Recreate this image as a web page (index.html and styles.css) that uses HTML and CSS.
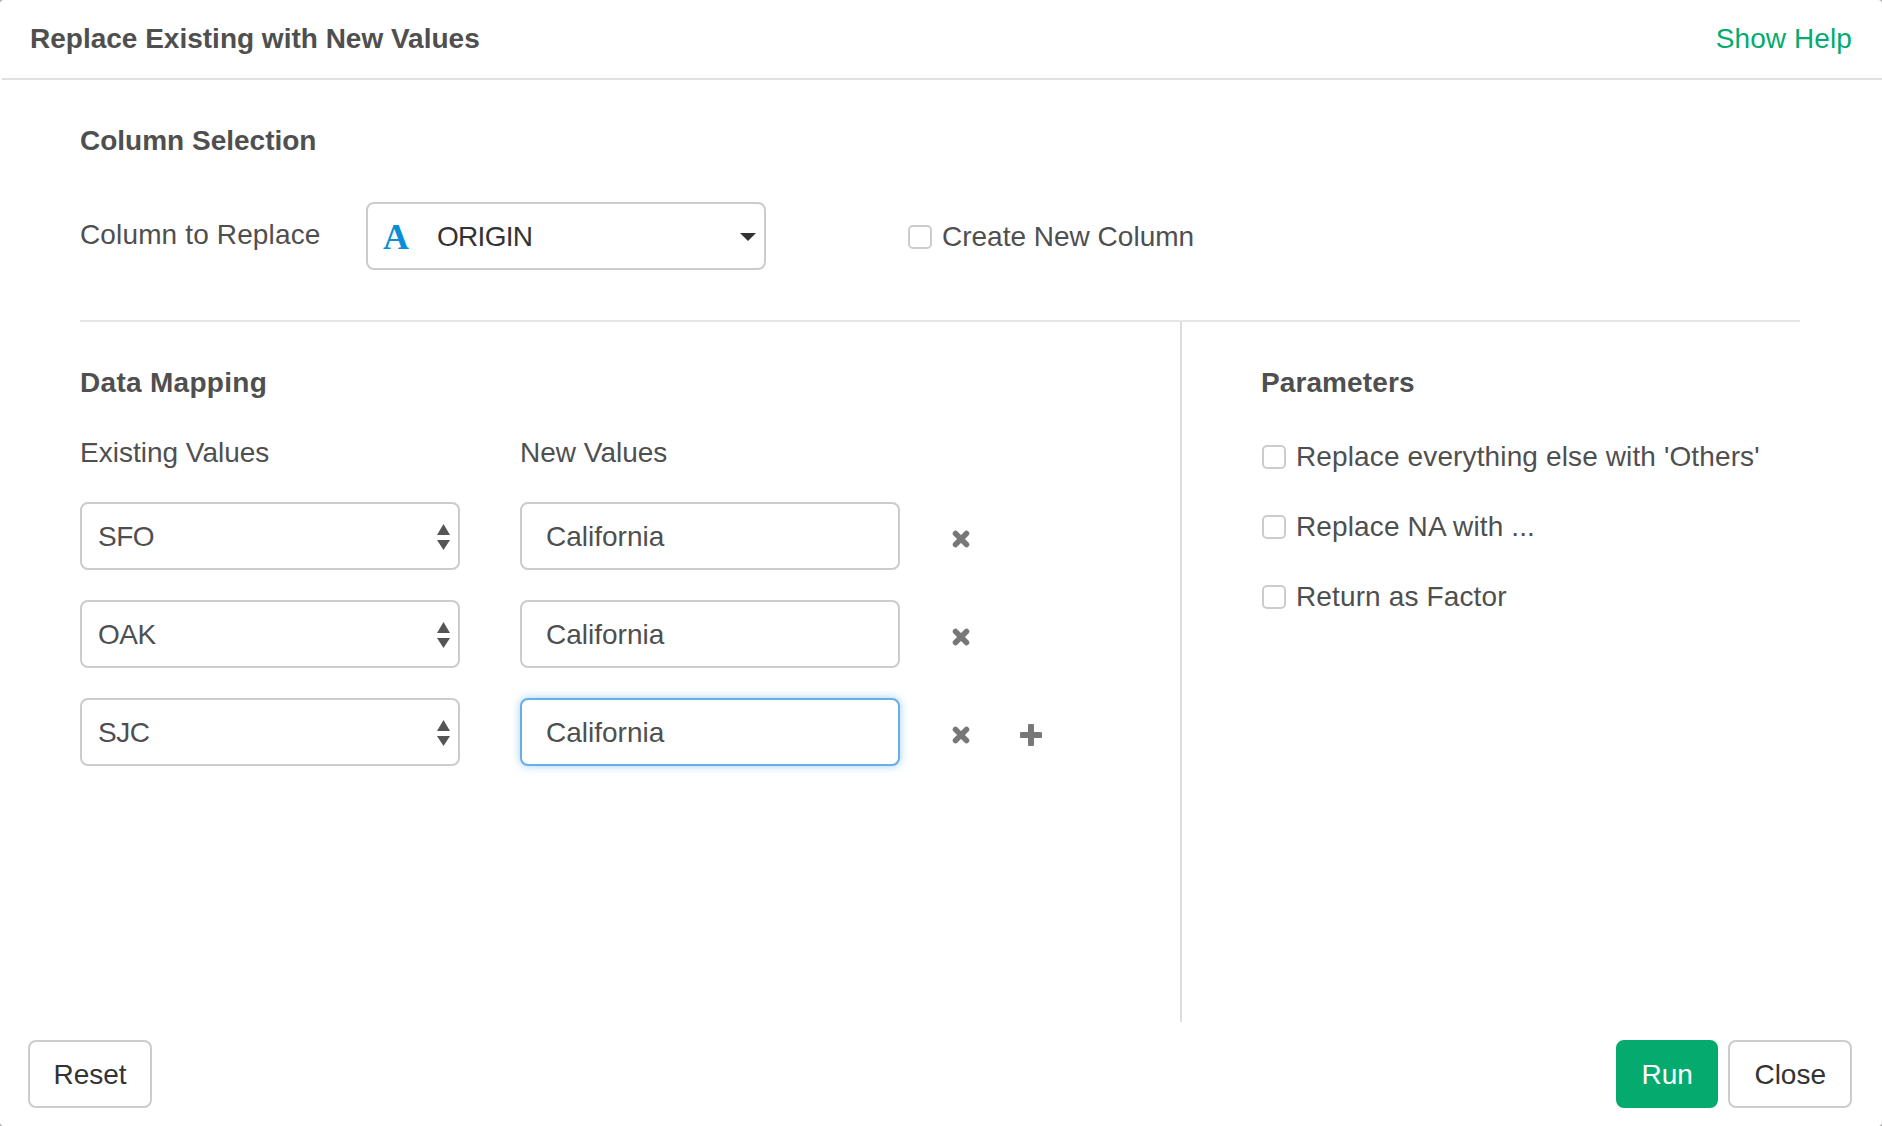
FILE: index.html
```html
<!DOCTYPE html>
<html lang="en">
<head>
    <meta charset="UTF-8">
    <title>Replace Existing with New Values</title>
    <link rel="stylesheet" href="styles.css">
</head>
<body>
    <div class="modal">
        <header class="modal-header">
            <h1 class="modal-title">Replace Existing with New Values</h1>
            <a class="help-link" href="#">Show Help</a>
        </header>

        <main class="modal-body">
            <section class="column-section">
                <h2 class="section-title">Column Selection</h2>
                <div class="column-row">
                    <label class="column-label">Column to Replace</label>
                    <div class="column-select">
                        <span class="type-icon">A</span>
                        <span class="column-name">ORIGIN</span>
                        <svg class="caret" width="16" height="8" viewBox="0 0 16 8"><path d="M0 0h16L8 8z"/></svg>
                    </div>
                    <label class="check-row create-column"><input type="checkbox" class="check">Create New Column</label>
                </div>
            </section>

            <div class="split">
                <section class="mapping">
                    <h2 class="section-title">Data Mapping</h2>
                    <div class="mapping-head">
                        <span>Existing Values</span>
                        <span>New Values</span>
                    </div>

                    <div class="mapping-row">
                        <div class="value-select">
                            <span>SFO</span>
                            <svg class="updown" width="13" height="26" viewBox="0 0 13 26"><path d="M6.500 0L13 11H0zM0 16h13L6.500 26z"/></svg>
                        </div>
                        <input class="value-input" type="text" value="California">
                        <button class="icon-btn" type="button"><svg width="18" height="18" viewBox="0 0 18 18"><path d="M3.500 3.500l11 11M14.500 3.500l-11 11"/></svg></button>
                    </div>

                    <div class="mapping-row">
                        <div class="value-select">
                            <span>OAK</span>
                            <svg class="updown" width="13" height="26" viewBox="0 0 13 26"><path d="M6.500 0L13 11H0zM0 16h13L6.500 26z"/></svg>
                        </div>
                        <input class="value-input" type="text" value="California">
                        <button class="icon-btn" type="button"><svg width="18" height="18" viewBox="0 0 18 18"><path d="M3.500 3.500l11 11M14.500 3.500l-11 11"/></svg></button>
                    </div>

                    <div class="mapping-row">
                        <div class="value-select">
                            <span>SJC</span>
                            <svg class="updown" width="13" height="26" viewBox="0 0 13 26"><path d="M6.500 0L13 11H0zM0 16h13L6.500 26z"/></svg>
                        </div>
                        <input class="value-input is-focus" type="text" value="California">
                        <button class="icon-btn" type="button"><svg width="18" height="18" viewBox="0 0 18 18"><path d="M3.500 3.500l11 11M14.500 3.500l-11 11"/></svg></button>
                        <button class="icon-btn add-btn" type="button"><svg width="22" height="22" viewBox="0 0 22 22"><path d="M11 2v18M2 11h18"/></svg></button>
                    </div>
                </section>

                <section class="parameters">
                    <h2 class="section-title">Parameters</h2>
                    <label class="check-row"><input type="checkbox" class="check">Replace everything else with 'Others'</label>
                    <label class="check-row"><input type="checkbox" class="check">Replace NA with ...</label>
                    <label class="check-row"><input type="checkbox" class="check">Return as Factor</label>
                </section>
            </div>
        </main>

        <footer class="modal-footer">
            <button class="btn" type="button">Reset</button>
            <div class="footer-right">
                <button class="btn btn-run" type="button">Run</button>
                <button class="btn btn-close" type="button">Close</button>
            </div>
        </footer>
    </div>
</body>
</html>
```

FILE: styles.css
```css
* {
    box-sizing: border-box;
}
html, body {
    height: 100%;
}
body {
    margin: 0;
    background-color: #aaa;
    color: #4f4f4f;
    font-family: 'Liberation Sans', Arial, sans-serif;
    font-size: 28px;
    overflow: hidden;
}
.modal {
    display: flex;
    flex-direction: column;
    height: 1126px;
    border-radius: 4px;
    background-color: #fff;
}
.modal-header {
    display: flex;
    justify-content: space-between;
    align-items: center;
    height: 80px;
    margin-left: 2px;
    padding: 0 30px 0 28px;
    border-bottom: 2px solid #e0e0e0;
}
.modal-title {
    margin: 0;
    font-size: 28px;
    font-weight: bold;
}
.help-link {
    color: #05ab6e;
    text-decoration: none;
    letter-spacing: 0.100px;
}
.modal-body {
    flex: 1;
    display: flex;
    flex-direction: column;
    padding: 0 82px 0 80px;
}
.section-title {
    margin: 0;
    font-size: 28px;
    line-height: 36px;
    font-weight: bold;
}
.column-section {
    height: 242px;
    padding-top: 43px;
    border-bottom: 2px solid #e6e6e6;
}
.column-row {
    display: flex;
    align-items: center;
    margin-top: 43px;
}
.column-label {
    width: 286px;
    margin-top: -3px;
    letter-spacing: 0.140px;
}
.column-select {
    display: flex;
    align-items: center;
    width: 400px;
    height: 68px;
    padding: 2px 8px 0 15px;
    border: 2px solid #ccc;
    border-radius: 8px;
    color: #333;
}
.type-icon {
    width: 54px;
    font-family: 'Liberation Serif', serif;
    font-size: 36px;
    font-weight: bold;
    color: #0a8fd6;
}
.column-name {
    flex: 1;
    letter-spacing: -0.700px;
}
.caret {
    fill: #333;
}
.check-row {
    display: flex;
    align-items: center;
    gap: 10px;
}
.create-column {
    margin-left: 142px;
    padding-top: 2px;
}
.check {
    appearance: none;
    flex: none;
    width: 24px;
    height: 24px;
    margin: 0;
    border: 2px solid #ccc;
    border-radius: 5px;
    background-color: #fff;
}
.split {
    flex: 1;
    display: flex;
}
.mapping {
    width: 1100px;
    padding-top: 43px;
}
.mapping .section-title {
    letter-spacing: 0.300px;
}
.mapping-head {
    display: grid;
    grid-template-columns: 440px 1fr;
    margin-top: 34px;
    margin-bottom: 31px;
    line-height: 36px;
}
.mapping-row {
    display: flex;
    align-items: center;
    height: 68px;
    margin-bottom: 30px;
}
.value-select {
    display: flex;
    justify-content: space-between;
    align-items: center;
    width: 380px;
    height: 68px;
    padding: 1px 8px 0 16px;
    border: 2px solid #ccc;
    border-radius: 8px;
    letter-spacing: -0.500px;
}
.updown {
    fill: #555;
}
.value-input {
    width: 380px;
    height: 68px;
    margin-left: 60px;
    padding: 2px 24px 0;
    border: 2px solid #ccc;
    border-radius: 8px;
    color: #4f4f4f;
    font-family: inherit;
    font-size: 28px;
    outline: none;
}
.value-input.is-focus {
    border-color: #66afe9;
    box-shadow: 0 0 8px rgba(102, 175, 233, 0.6);
}
.icon-btn {
    display: flex;
    width: 18px;
    height: 18px;
    margin: 6px 0 0 52px;
    padding: 0;
    border: none;
    background: none;
}
.icon-btn svg {
    fill: none;
    stroke: #777;
    stroke-width: 5.500;
    stroke-linecap: round;
    flex: none;
}
.add-btn {
    width: 22px;
    height: 22px;
    margin-left: 50px;
}
.add-btn svg {
    stroke-width: 6;
}
.parameters {
    flex: 1;
    padding: 43px 0 0 80px;
    border-left: 2px solid #ddd;
}
.parameters .check-row {
    height: 36px;
    margin-bottom: 34px;
    letter-spacing: 0.130px;
}
.parameters .section-title {
    margin-left: -1px;
    margin-bottom: 38px;
    letter-spacing: 0.100px;
}
.modal-footer {
    display: flex;
    justify-content: space-between;
    height: 104px;
    padding: 18px 30px 18px 28px;
}
.footer-right {
    display: flex;
    gap: 10px;
}
.btn {
    height: 68px;
    padding: 2px 23.500px 0;
    border: 2px solid #ccc;
    border-radius: 8px;
    background-color: #fff;
    color: #333;
    font-family: inherit;
    font-size: 28px;
}
.btn-run {
    border-color: #05ab6e;
    background-color: #05ab6e;
    color: #fff;
}
.btn-close {
    padding: 2px 24px 0;
}
```
